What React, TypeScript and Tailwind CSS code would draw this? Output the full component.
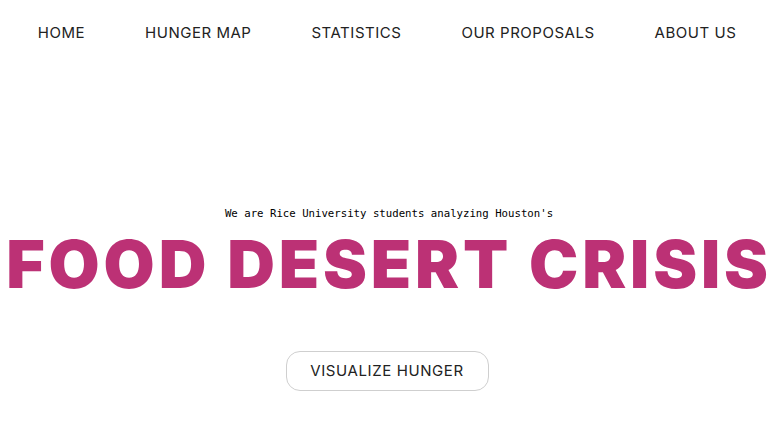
const navItems = ['HOME', 'HUNGER MAP', 'STATISTICS', 'OUR PROPOSALS', 'ABOUT US'];

export default function App() {
  return (
    <div className="h-[421px] w-[778px] overflow-hidden bg-white font-['Inter',sans-serif]">
      <nav className="flex h-[66px] items-center justify-center gap-[60px] pr-[4px]">
        {navItems.map((item) => (
          <a key={item} className="text-[15px] tracking-[0.035em] text-[#222]">
            {item}
          </a>
        ))}
      </nav>
      <div className="flex flex-col items-center pt-[141px]">
        <p className="font-['DejaVu_Sans_Mono',monospace] text-[10.7px] leading-[14px] text-black">
          We are Rice University students analyzing Houston's
        </p>
        <h1 className="mt-[10px] whitespace-nowrap text-[66px] font-black leading-[66px] tracking-[0.058em] text-[#bc3175]">
          FOOD DESERT CRISIS
        </h1>
        <button className="mr-[4px] mt-[54px] flex h-[40px] w-[203px] items-center justify-center rounded-[14px] border border-[#cfcfcf] text-[15px] tracking-[0.04em] text-[#222]">
          VISUALIZE HUNGER
        </button>
      </div>
    </div>
  );
}
